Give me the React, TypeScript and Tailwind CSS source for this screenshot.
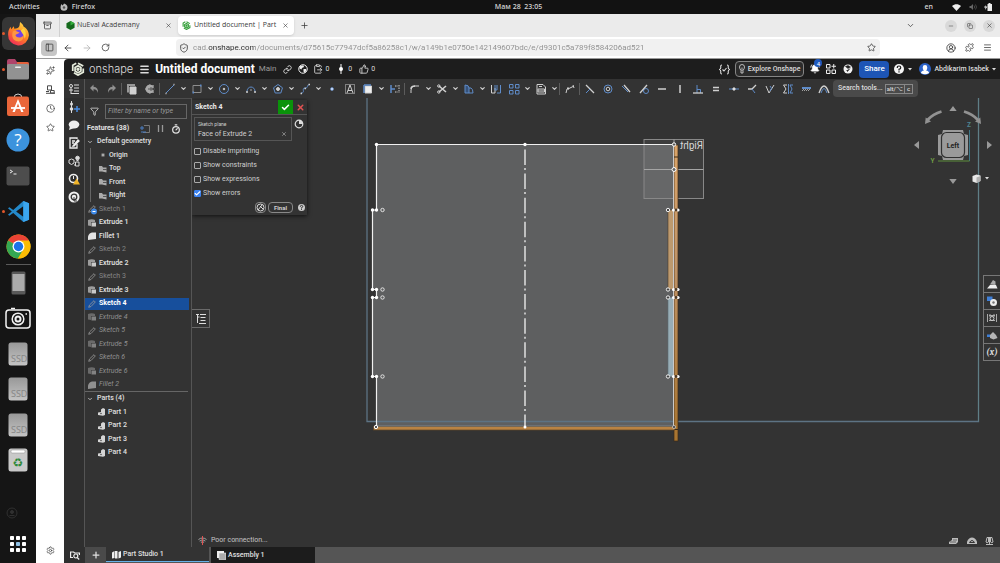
import type { ReactNode } from 'react'
import {
  ArrowLeft, ArrowRight, BellRing, Check, ChevronDown, CircleUserRound, ClipboardPaste, Clock, Filter,
  Link, Menu, MessageCircle, Minus, Plus, Puzzle, RotateCw, Settings, ShieldCheck, Sparkles, Star,
  ThumbsUp, Timer, Wifi, X, PanelLeft, Archive, Copy,
} from 'lucide-react'

type Kind = 'sketch' | 'extrude' | 'fillet' | 'sketchOff'

interface Feature {
  name: string
  kind: Kind
  state: 'on' | 'dim' | 'active' | 'rolled'
}

const FEATURES: Feature[] = [
  { name: 'Sketch 1', kind: 'sketchOff', state: 'dim' },
  { name: 'Extrude 1', kind: 'extrude', state: 'on' },
  { name: 'Fillet 1', kind: 'fillet', state: 'on' },
  { name: 'Sketch 2', kind: 'sketch', state: 'dim' },
  { name: 'Extrude 2', kind: 'extrude', state: 'on' },
  { name: 'Sketch 3', kind: 'sketch', state: 'dim' },
  { name: 'Extrude 3', kind: 'extrude', state: 'on' },
  { name: 'Sketch 4', kind: 'sketch', state: 'active' },
  { name: 'Extrude 4', kind: 'extrude', state: 'rolled' },
  { name: 'Sketch 5', kind: 'sketch', state: 'rolled' },
  { name: 'Extrude 5', kind: 'extrude', state: 'rolled' },
  { name: 'Sketch 6', kind: 'sketch', state: 'rolled' },
  { name: 'Extrude 6', kind: 'extrude', state: 'rolled' },
  { name: 'Fillet 2', kind: 'fillet', state: 'rolled' },
]

const STATE_STYLES: Record<Feature['state'], string> = {
  on: 'text-[#e4e4e4] font-medium',
  dim: 'text-[#858585]',
  active: 'bg-[#174f9c] text-white font-bold',
  rolled: 'text-[#909090] italic',
}

const ROW = 'flex items-center odd:h-[13px] even:h-[14px]'

/* ---------- desktop ---------- */

function TopBar() {
  return (
    <header className="grid h-[14px] shrink-0 grid-cols-3 items-center bg-[#121212] font-['Open_Sans',sans-serif] text-[7px] font-semibold text-[#cfcfcf]">
      <div className="flex items-center pl-[9px]">
        <button>Activities</button>
        <button className="ml-5 flex items-center gap-1">
          <svg width="8" height="8" viewBox="0 0 16 16"><path d="M8 1c3 1 7 3 7 7.500a7 7 0 0 1-14 0C1 6 2 4 3 2l2 3c1-1 2-2 3-4z" fill="#bbb" /><circle cx="8" cy="9" r="2.500" fill="#555" /></svg>
          Firefox
        </button>
      </div>
      <button className="justify-self-center pl-[37px]">Мам 28&nbsp; 23:05</button>
      <div className="flex items-center justify-end pr-2">
        <span>en</span>
        <svg className="ml-[19px]" width="9" height="7" viewBox="0 0 16 12"><path d="M0 3.500C5-1 11-1 16 3.500L8 12z" fill="#eee" /></svg>
        <svg className="ml-2" width="8" height="8" viewBox="0 0 16 16"><path d="M1 6h3l4-4v12l-4-4H1z" fill="#666" /><path d="M10 5q3 3 0 6M13 3q4 5 0 10" fill="none" stroke="#555" strokeWidth="1.500" /></svg>
        <svg className="ml-[7px]" width="8" height="8" viewBox="0 0 16 16"><path d="M7 2h2V0h4v2h3v14H7z" fill="#eee" /><path d="M3 4 0 9h3l-1 5 5-7H3z" fill="#eee" /></svg>
      </div>
    </header>
  )
}

function FirefoxLogo() {
  return (
    <svg width="25" height="25" viewBox="0 0 48 48">
      <defs>
        <linearGradient id="fx" x1="0.8" y1="0" x2="0.2" y2="1">
          <stop offset="0" stopColor="#ffe14a" /><stop offset="0.45" stopColor="#ff8a1e" /><stop offset="1" stopColor="#f0255e" />
        </linearGradient>
      </defs>
      <path d="M27 2c4 3 6 6 7 9 5 2 10 9 10 17A20 20 0 0 1 4 26c0-7 2-11 5-15l1 5 5-6 1 5c4-1 7-1 9-4 2-3 1-6 2-9z" fill="url(#fx)" />
      <circle cx="24" cy="27" r="10" fill="#7542e5" />
      <path d="M13 20c6-3 8 1 13 2-4 4-5 2-8 5 2 6 11 7 16 0 1 9-6 13-12 12-8-1-12-9-9-19z" fill="#ff9640" />
      <path d="M34 14c5 6 5 14 2 20-1-8-5-10-8-16z" fill="#ffd23c" />
    </svg>
  )
}

function ChromeLogo() {
  return (
    <svg width="25" height="25" viewBox="0 0 48 48">
      <circle cx="24" cy="24" r="23" fill="#fbbc05" />
      <path d="M24 24 4 12.500A23 23 0 0 1 44 12.500z" fill="#ea4335" />
      <path d="M24 24 4 12.500A23 23 0 0 0 23 47L34 29z" fill="#34a853" />
      <path d="M24 12.500h20A23 23 0 0 1 23 47l11-18z" fill="#fbbc05" />
      <circle cx="24" cy="24" r="11.500" fill="#fff" />
      <circle cx="24" cy="24" r="9" fill="#1a73e8" />
    </svg>
  )
}

function Ssd() {
  return (
    <svg width="20" height="24" viewBox="0 0 20 24">
      <defs>
        <linearGradient id="ssd" x1="0" y1="0" x2="0" y2="1"><stop offset="0" stopColor="#989898" /><stop offset="1" stopColor="#c4c4c4" /></linearGradient>
      </defs>
      <rect x="0.500" y="0.500" width="19" height="23" rx="2.500" fill="url(#ssd)" />
      <text x="3" y="20" fontSize="9" fill="#858585" fontFamily="Open Sans">SSD</text>
    </svg>
  )
}

function DockItem({ label, running, active, children }: { label: string; running?: boolean; active?: boolean; children: ReactNode }) {
  return (
    <li className="relative flex w-full items-center justify-center odd:h-[35px] even:h-9">
      {running && <span className="absolute left-[2px] size-[3px] rounded-full bg-[#e2582c]" />}
      <button aria-label={label} className={`flex h-[33px] w-[33px] items-center justify-center rounded-md ${active ? 'bg-[#363636]' : ''}`}>
        {children}
      </button>
    </li>
  )
}

function Dock() {
  return (
    <nav aria-label="Dock" className="flex w-9 shrink-0 flex-col items-center bg-[#151515] pt-[2px]">
      <ul className="w-full">
        <DockItem label="Firefox" running active><FirefoxLogo /></DockItem>
        <DockItem label="Files" running>
          <svg width="24" height="22" viewBox="0 0 24 22"><path d="M1 3q0-2 2-2h6l2 3h10q2 0 2 2v6H1z" fill="#b0446a" /><path d="M11 4h10q2 0 2 2v6H11z" fill="#e2603a" /><rect x="1" y="6" width="22" height="15.500" rx="1.500" fill="#929292" /><rect x="9" y="8.500" width="6" height="1.500" rx="0.700" fill="#eee" /></svg>
        </DockItem>
        <DockItem label="Software">
          <svg width="24" height="24" viewBox="0 0 24 24"><path d="M8 5q0-4 4-4t4 4" fill="none" stroke="#ccc" /><rect x="1" y="3.500" width="22" height="19.500" rx="2" fill="#e9663a" /><path d="M12 6 6.500 19h2.300l3.200-8.500 3.200 8.500h2.300z" fill="#fff" /><path d="M5 15h14" stroke="#fff" strokeWidth="1.800" /></svg>
        </DockItem>
        <DockItem label="Help">
          <svg width="24" height="24" viewBox="0 0 24 24"><circle cx="12" cy="12" r="11.500" fill="#3c93dd" /><text x="12" y="18" textAnchor="middle" fontSize="17" fill="#fff" fontFamily="Open Sans">?</text></svg>
        </DockItem>
        <DockItem label="Terminal">
          <svg width="24" height="20" viewBox="0 0 24 20"><rect x="0.500" y="0.500" width="23" height="19" rx="2" fill="#4d4d4d" /><path d="m4 4 2.500 1.500L4 7M7.500 8h3" fill="none" stroke="#eee" /></svg>
        </DockItem>
        <DockItem label="Code" running>
          <svg width="23" height="23" viewBox="0 0 24 24"><path d="M17 1 6.500 10.500 2.500 7.500 1 8.500 5 12l-4 3.500 1.500 1 4-3L17 23l6-2.500v-17z" fill="#2489ca" /><path d="M17 6.500v11L9.500 12z" fill="#151515" /><path d="m17 1 6 2.500v17L17 23z" fill="#3ba6ee" /></svg>
        </DockItem>
        <DockItem label="Chrome"><ChromeLogo /></DockItem>
      </ul>
      <hr className="w-[25px] border-[#5a5a5a]" />
      <ul className="w-full">
        <DockItem label="Phone">
          <svg width="15" height="24" viewBox="0 0 15 24"><rect x="0.500" y="0.500" width="14" height="23" rx="1.500" fill="#595959" /><rect x="1.500" y="3" width="12" height="17" fill="#ababab" /></svg>
        </DockItem>
        <DockItem label="Camera">
          <svg width="26" height="22" viewBox="0 0 26 22" fill="none" stroke="#f2f2f2" strokeWidth="1.500"><rect x="1" y="3" width="24" height="18" rx="3" /><path d="M6 1.500h4" /><circle cx="13" cy="12" r="5.800" /><circle cx="13" cy="12" r="2.500" strokeWidth="2" /><path d="M20.500 7h1.500" /></svg>
        </DockItem>
        <DockItem label="Disk 1"><Ssd /></DockItem>
        <DockItem label="Disk 2"><Ssd /></DockItem>
        <DockItem label="Disk 3"><Ssd /></DockItem>
        <DockItem label="Trash">
          <svg width="20" height="24" viewBox="0 0 20 24"><rect x="0.500" y="0.500" width="19" height="23" rx="2.500" fill="#c9c9c9" /><rect x="3" y="2" width="14" height="3" rx="1" fill="#fff" stroke="#888" strokeWidth="0.500" /><text x="10" y="19" textAnchor="middle" fontSize="12" fill="#2f8a3a" fontFamily="DejaVu Sans">♻</text></svg>
        </DockItem>
      </ul>
      <svg className="mt-auto mr-3" width="12" height="12" viewBox="0 0 12 12" fill="none" stroke="#303030"><circle cx="6" cy="6" r="5" /><circle cx="6" cy="5" r="1.500" fill="#303030" /><path d="M3.500 8.500h5" /></svg>
      <button aria-label="Show applications" className="mt-4 mb-[10px]">
        <svg width="18" height="18" viewBox="0 0 18 18">
          {[1, 7, 13].map((y) => [1, 7, 13].map((x) => <rect key={`${x}-${y}`} x={x} y={y} width="4" height="4" rx="0.800" fill={x === 7 && y === 7 ? '#8fc1e6' : '#fff'} />))}
        </svg>
      </button>
    </nav>
  )
}

/* ---------- browser ---------- */

function HexLogo({ size, color }: { size: number; color: string }) {
  return (
    <svg className="shrink-0" width={size} height={size} viewBox="0 0 24 24" fill="none" stroke={color} strokeWidth="3">
      <path d="M9 2 3 5.500v10M5 18.500l7 4 9-5V11M21 7l-9-5" />
      <path d="m12 6.500 5 3v6l-5 3-5-3v-6z" />
      <circle cx="12" cy="12.500" r="1.500" fill={color} />
    </svg>
  )
}

function BrowserChrome() {
  return (
    <div className="shrink-0 font-['Open_Sans',sans-serif] text-[#3b3b3b]">
      {/* Tabs */}
      <div className="flex h-[23px] items-center bg-[#ebebeb] text-[7px]">
        <button aria-label="Recent tabs" className="flex h-full w-6 items-center justify-center border-r border-[#d0d0d0]"><Archive size={9} /></button>
        <div className="flex w-[118px] items-center px-[6px]">
          <svg width="9" height="9" viewBox="0 0 10 10"><path d="m5 0 4.500 2.500v5L5 10 .5 7.500v-5z" fill="#14691c" /><path d="m5 5 4.500-2.500L5 0z" fill="#35b03c" /></svg>
          <span className="ml-[2px] flex-1 whitespace-nowrap">NuEval Academany</span>
          <button aria-label="Close NuEval Academany"><X size={7} /></button>
        </div>
        <div className="flex h-[19px] w-[116px] items-center rounded bg-white pr-[5px] pl-1 shadow-sm">
          <HexLogo size={9} color="#35a03a" />
          <span className="ml-[3px] flex-1 whitespace-nowrap">Untitled document | Part</span>
          <button aria-label="Close Untitled document"><X size={7} /></button>
        </div>
        <button aria-label="New tab" className="ml-[6px]"><Plus size={9} /></button>
        <button aria-label="List all tabs" className="ml-auto"><ChevronDown size={9} /></button>
        <div className="ml-[30px] flex gap-[7px] pr-[5px]">
          <button aria-label="Minimize" className="flex size-3 items-center justify-center rounded-full bg-[#d9d9d9]"><Minus size={6} /></button>
          <button aria-label="Restore" className="flex size-3 items-center justify-center rounded-full bg-[#d9d9d9]"><Copy size={6} /></button>
          <button aria-label="Close" className="flex size-3 items-center justify-center rounded-full bg-[#d9d9d9]"><X size={7} /></button>
        </div>
      </div>
      {/* Address bar */}
      <div className="flex h-[22px] items-center border-b border-[#999] bg-white">
        <button aria-label="Sidebar" className="ml-[5px] flex h-4 w-4 items-center justify-center rounded-sm bg-[#c6c6c6]"><PanelLeft size={9} /></button>
        <button aria-label="Back" className="ml-[6px]"><ArrowLeft size={10} /></button>
        <button aria-label="Forward" className="ml-[9px] text-[#b4b4b4]"><ArrowRight size={10} /></button>
        <button aria-label="Reload" className="ml-[9px]"><RotateCw size={9} /></button>
        <div className="ml-[66px] flex h-[17px] flex-1 items-center rounded bg-[#f1f1f1] pr-1 pl-[3px]">
          <ShieldCheck size={10} />
          <input
            aria-label="Address"
            className="ml-1 flex-1 bg-[linear-gradient(90deg,#8e8e8e_15px,#2b2b2b_15px,#2b2b2b_62px,#8e8e8e_62px)] bg-clip-text font-['Roboto',sans-serif] text-[8px] text-transparent outline-none"
            defaultValue="cad.onshape.com/documents/d75615c77947dcf5a86258c1/w/a149b1e0750e142149607bdc/e/d9301c5a789f8584206ad521"
          />
          <button aria-label="Bookmark"><Star size={9} /></button>
        </div>
        <div className="ml-[66px] flex gap-[9px] pr-2">
          <button aria-label="Account"><CircleUserRound size={10} /></button>
          <button aria-label="Extensions"><Puzzle size={9} /></button>
          <button aria-label="Menu"><Menu size={9} /></button>
        </div>
      </div>
    </div>
  )
}

function BrowserSidebar() {
  return (
    <nav aria-label="Sidebar" className="flex w-7 shrink-0 flex-col items-center gap-[10px] bg-white pt-[7px] pb-2 text-[#4a4a4a]">
      <button aria-label="Assistant"><Sparkles size={9} /></button>
      <button aria-label="Synced tabs">
        <svg width="9" height="9" viewBox="0 0 9 9" fill="none" stroke="#4a4a4a"><path d="M1.500 5V.8h4V5zM4.500 5.500h3.700V8H4.500zM0 6.500h3M0 8.300h9" /></svg>
      </button>
      <button aria-label="History"><Clock size={9} /></button>
      <button aria-label="Bookmarks"><Star size={9} /></button>
      <button aria-label="Settings" className="mt-auto"><Settings size={9} /></button>
    </nav>
  )
}

/* ---------- application header ---------- */

function AppHeader() {
  return (
    <header className="flex h-5 shrink-0 items-center rounded-tl bg-[#1d1d1d] text-[7px] whitespace-nowrap text-[#dcdcdc]">
      <a href="#" className="ml-[7px] flex items-center gap-1 font-['Inter',sans-serif] text-[11px] leading-none font-light">
        <HexLogo size={14} color="#e6ecdc" />
        onshape
      </a>
      <button aria-label="Document menu" className="ml-[6px]"><Menu size={11} strokeWidth={3} /></button>
      <h1 className="ml-[5px] text-[12px] leading-none font-bold text-white">Untitled document</h1>
      <span className="ml-1 text-[8px] text-[#9b9b9b]">Main</span>
      <button aria-label="Copy link" className="ml-[7px]"><Link size={9} strokeWidth={2.5} /></button>
      <button aria-label="Public" className="ml-[6px]">
        <svg width="10" height="10" viewBox="0 0 20 20"><circle cx="10" cy="10" r="8.500" fill="#1d1d1d" stroke="#eee" strokeWidth="2" /><path d="M3 5q4-3 8-2l1 3-4 2-1 3-4-2zM11 10l5 0 1 3-4 5-2-3z" fill="#eee" /></svg>
      </button>
      <button className="ml-[5px] flex items-center gap-[2px]"><ClipboardPaste size={10} /> 0</button>
      <button className="ml-2 flex items-center gap-[3px]">
        <svg width="8" height="10" viewBox="0 0 8 10"><path d="M4 0v10" stroke="#fff" /><circle cx="4" cy="5" r="2" fill="#fff" /></svg>0
      </button>
      <button className="ml-[7px] flex items-center gap-[2px]"><ThumbsUp size={10} /> 0</button>

      <div className="ml-auto flex items-center">
        <button aria-label="Custom checks">
          <svg width="11" height="11" viewBox="0 0 22 22" fill="none" stroke="#ddd" strokeWidth="2.200"><path d="M6 2Q3 2 3.500 6 4 10 1 11q3 1 2.500 5Q3 20 6 20M16 2q3 0 2.500 4Q18 10 21 11q-3 1-2.500 5 .5 4-2.500 4M7 11l3 3 5-6" /></svg>
        </button>
        <button className="ml-[5px] flex h-4 items-center gap-[3px] rounded-sm border border-[#858585] bg-[#2c2c2c] px-[3px] font-medium">
          <svg width="6" height="10" viewBox="0 0 12 20" fill="none" stroke="#ddd" strokeWidth="1.600"><path d="M4 13Q1 9 1 6a5 5 0 0 1 10 0q0 3-3 7v5H4zM6 7v7" /></svg>
          Explore Onshape
        </button>
        <button aria-label="Notifications" className="relative ml-[6px] text-white">
          <BellRing size={10} fill="white" />
          <span className="absolute -top-[5px] left-1 flex size-2 items-center justify-center rounded-sm bg-[#2059bd] text-[6px]">4</span>
        </button>
        <button aria-label="App store" className="ml-[6px]">
          <svg width="10" height="10" viewBox="0 0 20 20" fill="none" stroke="#eee" strokeWidth="2"><path d="M1 1h7v7H1zM1 12h7v7H1zM12 12h7v7h-7zM15.500 0v9M11 4.500h9" /></svg>
        </button>
        <button aria-label="Learning center" className="ml-[7px]">
          <svg width="10" height="10" viewBox="0 0 20 20"><circle cx="10" cy="10" r="9" fill="#f2f2f2" /><path d="m5 5 5-2 5 3-5 3zM7 13l2 2 5-6" fill="#222" stroke="#222" strokeWidth="1.200" /></svg>
        </button>
        <button className="ml-[6px] h-[17px] w-[30px] rounded-sm bg-[#1d55b5] text-[8px] font-medium text-white">Share</button>
        <button className="ml-[5px] flex items-center gap-1" aria-label="Help">
          <svg width="10" height="10" viewBox="0 0 20 20"><circle cx="10" cy="10" r="10" fill="#f5f5f5" /><path d="M6.500 8q0-4 3.500-4t3.500 3.500Q13.500 10 10 10.500V13M10 14.500V17" fill="none" stroke="#1d1d1d" strokeWidth="2.400" /></svg>
          <svg width="4" height="3" viewBox="0 0 4 3"><path d="M0 0h4L2 2.500z" fill="#ddd" /></svg>
        </button>
        <button className="ml-[7px] flex items-center gap-[3px] pr-1 font-medium">
          <svg width="12" height="12" viewBox="0 0 24 24"><circle cx="12" cy="12" r="12" fill="#2c63c8" /><path d="M12 4q5 0 4.500 6-.5 4-2.500 5 6 1 6 5-8 5-16 0 0-4 6-5-2-1-2.500-5Q7 4 12 4z" fill="#fff" /></svg>
          Abdikarim Isabek
          <svg width="4" height="3" viewBox="0 0 4 3"><path d="M0 0h4L2 2.500z" fill="#ddd" /></svg>
        </button>
      </div>
    </header>
  )
}

/* ---------- toolbar ---------- */

const W = '#d0d0d0'
const B = '#5f8cc9'

function Tool({ label, caret, children }: { label: string; caret?: boolean; children: ReactNode }) {
  return (
    <div className={`flex shrink-0 items-center ${caret ? 'w-[27px]' : 'w-[18px]'}`}>
      <button aria-label={label} className="w-[14px]">
        <svg width="14" height="14" viewBox="0 0 14 14" fill="none" stroke={W}>{children}</svg>
      </button>
      {caret && (
        <button aria-label={`${label} options`} className="flex w-[13px] justify-center text-[#d0d0d0]">
          <ChevronDown size={7} strokeWidth={4} />
        </button>
      )}
    </div>
  )
}

function Divider() {
  return <span className="mr-[3px] -ml-[2px] h-3 w-px shrink-0 bg-[#5c5c5c]" />
}

const CONSTRAINTS: { label: string; icon: ReactNode }[] = [
  { label: 'Coincident', icon: <><path d="m3 3 8 8" strokeWidth="1.300" /><path d="m7 7-4 4" stroke={B} /></> },
  { label: 'Concentric', icon: <><circle cx="7" cy="7" r="4" stroke={B} /><circle cx="7" cy="7" r="1.800" /></> },
  { label: 'Parallel', icon: <><path d="m3 4 6 6" stroke={B} /><path d="m5 3 6 7" strokeWidth="1.300" /></> },
  { label: 'Tangent', icon: <><circle cx="9" cy="9" r="2.500" stroke={B} /><path d="m3 11 7-8" strokeWidth="1.300" /></> },
  { label: 'Horizontal', icon: <path d="M3 7h8" strokeWidth="1.500" /> },
  { label: 'Vertical', icon: <path d="M7 3v8" strokeWidth="1.500" /> },
  { label: 'Perpendicular', icon: <><path d="M6 3v8" stroke={B} /><path d="M6 7.500h3.500V11" stroke={B} /><path d="M2 11h10" strokeWidth="1.300" /></> },
  { label: 'Equal', icon: <path d="M4 5.500h6M4 8.500h6" strokeWidth="1.500" /> },
  { label: 'Midpoint', icon: <><path d="M2 7h10" stroke={B} /><circle cx="7" cy="7" r="1.200" fill="#fff" /></> },
  { label: 'Normal', icon: <><path d="m3 7 4 0 4-4" strokeWidth="1.300" /><path d="m7 7 3 4" stroke={B} /></> },
  { label: 'Pierce', icon: <><path d="m3 4 3 7 5-8" /><path d="M7 4q3 2 0 5" stroke={B} /></> },
  { label: 'Symmetric', icon: <><path d="M6 3H2.500l2.500 4-2.500 4H6" /><path d="M12 3H9l2 4-2 4h3M7.500 2v10" stroke={B} /></> },
  { label: 'Fix', icon: <><path d="M3 6h9" stroke={B} strokeWidth="2" /><path d="m3 9 2-2m0 2 2-2m0 2 2-2m0 2 2-2" strokeWidth="0.700" /></> },
  { label: 'Curvature', icon: <><path d="M2 11Q7-3 12 11" strokeWidth="1.300" /><path d="M4 11Q7 2 10 11" stroke={B} /></> },
]

function Toolbar() {
  return (
    <div role="toolbar" aria-label="Sketch tools" className="flex h-[19px] shrink-0 items-center bg-[#333]">
      <button aria-label="Feature list" className="mr-[2px] flex h-full w-[21px] items-center justify-center border-r border-[#555]">
        <svg width="12" height="12" viewBox="0 0 12 12" fill="none" stroke="#ddd"><circle cx="3" cy="3" r="1.500" /><path d="M3 4.500V11M6 2h5M6 5h5M6 8h5M3 10.500h8M1 7h4" /></svg>
      </button>
      <Tool label="Undo"><path d="M6.500 2.500 3 6l3.500 3.500V7.200Q10 7 11 11q.5-6-4.500-6.300z" fill="#909090" stroke="none" /></Tool>
      <Tool label="Redo"><path d="M7.500 2.500 11 6 7.500 9.500V7.200Q4 7 3 11q-.5-6 4.500-6.300z" fill="#909090" stroke="none" /></Tool>
      <Divider />
      <Tool label="Copy"><path d="M3 10.500V3h7" stroke="#999" strokeWidth="2" /><path d="M5 5h6v7H5z" fill={W} /></Tool>
      <Tool label="Dimension"><path d="M9.500 4A4 4 0 1 0 9.500 10" fill="#aaa" stroke="#aaa" /><path d="M5 7h7M8 5v4" stroke="#555" /><path d="M10 3v3M10 8v3" /></Tool>
      <Divider />
      <Tool label="Line" caret><path d="m3 11 8-8" stroke={B} /><path d="M2.500 11.500h1M10.500 2.500h1" strokeWidth="1.500" /></Tool>
      <Tool label="Rectangle" caret><path d="M3 3.500h8v7H3z" stroke="#8d8d8d" /><path d="M2.500 10.500h1.500M10 3.500h1.500" stroke={B} strokeWidth="1.800" /></Tool>
      <Tool label="Circle" caret><circle cx="7" cy="7" r="4.500" stroke={B} /><circle cx="7" cy="7" r="0.800" fill={W} /></Tool>
      <Tool label="Arc" caret><path d="M3 9.500a4 4.500 0 0 1 8 0" stroke={B} /><path d="M2 10h2M10 10h2M6.500 8h1" strokeWidth="1.500" /></Tool>
      <Tool label="Polygon" caret><path d="m7 2.500 4.500 3.300-1.700 5.200H4.200L2.500 5.800z" stroke={B} /><circle cx="7" cy="7" r="1.500" fill={W} /></Tool>
      <Tool label="Spline" caret><path d="M3 11c5 0 0-5 4-5s1-3 4-3" stroke={B} /><path d="M2.500 11.500h1.500M6.500 6.500h1.500M10.500 2.500h1.500" strokeWidth="1.500" /></Tool>
      <Tool label="Point"><circle cx="7" cy="7" r="1.500" fill="#cfe2ff" stroke={B} strokeWidth="0.600" /></Tool>
      <Tool label="Text"><path d="M2.500 2.500h9v9h-9z" strokeDasharray="1 1" /><path d="m4 11 3-8 3 8M5 8.500h4" /></Tool>
      <Tool label="Use" caret><path d="M4 4h6.500v7H4z" fill="#eee" /><path d="m3 3 7 0M3 3v8" stroke={B} strokeWidth="1.500" /></Tool>
      <Tool label="Construction"><path d="M3 3v8M3 7h4" stroke={B} strokeWidth="1.500" /><path d="M7 4h3M7 10h3M11 3v8" strokeDasharray="1.500 1" /></Tool>
      <Divider />
      <Tool label="Sketch fillet" caret><path d="M3 11V8q0-4 4-4h4" /><path d="M3 7q0-3 4-3" strokeWidth="1.500" /></Tool>
      <Tool label="Trim" caret><path d="m4 4 7 6M4 10l7-6" strokeWidth="1.600" /><circle cx="3.800" cy="4" r="1.200" /><circle cx="3.800" cy="10" r="1.200" /></Tool>
      <Tool label="Offset" caret><path d="M3 11V3q4 0 4 3v5z" stroke={B} fill="#36527a" /><path d="M7 6h2q2 1 2 5H7" stroke={B} /></Tool>
      <Tool label="Slot"><path d="M2.500 3v8h3.500V6" /><path d="M6 3v5h2V3M8 11h3.500V3" stroke={B} /></Tool>
      <Tool label="Pattern" caret><path d="M2.500 2.500H6V6H2.500zM8.500 2.500H12V6H8.500zM2.500 8.500H6V12H2.500zM8.500 8.500H12V12H8.500z" stroke={B} /></Tool>
      <Tool label="Insert DXF" caret><path d="M3 2.500h6l2.500 2.500v7H3z" /><path d="M4 7h6.500v3H4zM5 4.500h3" /><path d="M4.500 8.500h5.500" strokeWidth="1.500" strokeDasharray="1 1" /></Tool>
      <Divider />
      <Tool label="Measure"><path d="m3 11 1-4M5 7l6-3M10 3l1 3" /><path d="M4 6.500h2" strokeWidth="2" /></Tool>
      <Divider />
      <div className="flex w-[243px] shrink-0 justify-between">
        {CONSTRAINTS.map((c) => <Tool key={c.label} label={c.label}>{c.icon}</Tool>)}
      </div>
      <button className="ml-[7px] flex h-[17px] w-[85px] shrink-0 items-center justify-center rounded-sm bg-[#4a4a4a] text-[7px] font-medium whitespace-nowrap text-[#ddd]">
        Search tools...
        <kbd className="ml-[2px] border border-[#888] px-px font-['Roboto',sans-serif] text-[6px] leading-[8px]">alt/⌥</kbd>
        <kbd className="border border-l-0 border-[#888] px-[2px] font-['Roboto',sans-serif] text-[6px] leading-[8px]">c</kbd>
      </button>
    </div>
  )
}

/* ---------- feature panel ---------- */

function LeftStrip() {
  return (
    <nav aria-label="Panels" className="flex w-[21px] shrink-0 flex-col items-center gap-[6px] border-r border-[#555] bg-[#2f2f2f] pt-[3px] text-[#eee]">
      <button aria-label="Insert version">
        <svg width="12" height="12" viewBox="0 0 12 12"><path d="M3.500 0v12" stroke="#ddd" /><circle cx="3.500" cy="3" r="1.500" fill="#ddd" /><circle cx="3.500" cy="8" r="1.800" fill="#ddd" /><path d="M9 5v6M6 8h6" stroke="#4a8ce0" strokeWidth="1.500" /></svg>
      </button>
      <button aria-label="Comments">
        <svg width="12" height="12" viewBox="0 0 12 12"><ellipse cx="6" cy="5.500" rx="5.300" ry="4" fill="#eee" /><path d="m2 7-1 4 5-2z" fill="#eee" /></svg>
      </button>
      <button aria-label="Notes">
        <svg width="12" height="12" viewBox="0 0 12 12" fill="none" stroke="#eee" strokeWidth="1.300"><path d="M9 7v4H2V1h7v1M4 4h3M4 6h2" /><path d="m5 9 5-6 1 1-5 5z" /></svg>
      </button>
      <button aria-label="Configurations">
        <svg width="12" height="12" viewBox="0 0 12 12" fill="none" stroke="#ddd"><path d="m1 5 2.500-1L6 5v3L3.500 9.500 1 8z" /><circle cx="9.500" cy="3" r="1.800" fill="#ddd" /><path d="M7.500 7h3.500v4H7.500zM8.500 5.500h2M6 10h1" /></svg>
      </button>
      <button aria-label="Warnings">
        <svg width="12" height="12" viewBox="0 0 12 12"><circle cx="5.500" cy="5.500" r="4" fill="none" stroke="#eee" strokeWidth="1.600" /><path d="M5.500 3v3" stroke="#eee" /><path d="m8.500 5.500 3.500 6H5z" fill="#f0b429" /></svg>
      </button>
      <button aria-label="Help">
        <svg width="12" height="12" viewBox="0 0 12 12"><circle cx="6" cy="6" r="5.500" fill="#f0f0f0" /><circle cx="6" cy="6" r="2.800" fill="none" stroke="#333" strokeWidth="1.300" /><path d="M6 6v4h3" stroke="#333" fill="none" /></svg>
      </button>
    </nav>
  )
}

function FeatureIcon({ kind }: { kind: Kind }) {
  if (kind === 'extrude') {
    return <svg width="8" height="8" viewBox="0 0 8 8"><path d="M0 1q4-1.500 7 0v2H3v4L0 6.500z" fill="currentColor" opacity="0.600" /><path d="M3.500 3.500H8v4H3.500z" fill="currentColor" opacity="0.850" /></svg>
  }
  if (kind === 'fillet') {
    return <svg width="8" height="8" viewBox="0 0 8 8"><path d="M0 8V4.500Q1 1 4 0.500h4V7z" fill="currentColor" /></svg>
  }
  return (
    <svg width="8" height="8" viewBox="0 0 8 8" className="overflow-visible">
      <path d="M.7 7.300 1.500 5 6 .7 7.300 2 3 6.500z" fill="none" stroke="#9a9a9a" strokeWidth="0.800" />
      {kind === 'sketchOff' && <><circle cx="6" cy="6.500" r="3" fill="#3f8ae8" /><path d="M4.500 6.500h3" stroke="#fff" /></>}
    </svg>
  )
}

function FeaturePanel() {
  return (
    <aside className="flex w-[107px] shrink-0 flex-col border-r border-[#555] bg-[#333] text-[7px] text-[#e0e0e0]">
      <div className="flex h-[25px] items-center gap-[6px] border-t border-[#4d4d4d] pr-1 pl-[5px]">
        <Filter size={9} />
        <input aria-label="Filter features" placeholder="Filter by name or type" className="h-[15px] w-0 flex-1 border border-[#666] px-[2px] italic outline-none placeholder:text-[#999]" />
      </div>
      <div className="flex h-[11px] items-center pl-[2px]">
        <h2 className="font-bold">Features (38)</h2>
        <div className="ml-auto flex items-center gap-[7px] pr-[10px]">
          <button aria-label="Add folder"><svg width="10" height="8" viewBox="0 0 10 8" fill="none"><path d="M4 .5h5.500v7H3" stroke="#777" /><path d="M0 3h4M2 1v4M1 7h5" stroke="#4a7fc4" /></svg></button>
          <button aria-label="Pause"><svg width="7" height="7" viewBox="0 0 7 7"><path d="M1.500 0v7M5.500 0v7" stroke="#999" strokeWidth="1.300" /></svg></button>
          <button aria-label="Timing"><Timer size={10} strokeWidth={3} /></button>
        </div>
      </div>
      <ul className="pt-px">
        <li className={ROW}>
          <button className="flex items-center gap-1 pl-[2px] font-medium"><ChevronDown size={6} strokeWidth={3} />Default geometry</button>
        </li>
        {['Origin', 'Top', 'Front', 'Right'].map((name) => (
          <li key={name} className={ROW}>
            <button className="ml-[5px] flex h-full items-center gap-[2px] border-l border-[#666] pl-2 font-medium">
              {name === 'Origin'
                ? <svg width="8" height="8" viewBox="0 0 8 8"><circle cx="4" cy="4" r="1.700" fill="#aaa" stroke="#666" /></svg>
                : <svg width="8" height="8" viewBox="0 0 8 8"><path d="M0 1h3l1 1.500h3.500v5L3 6.500H0z" fill="#aaa" /><path d="M4 4.500h4" stroke="#555" /></svg>}
              {name}
            </button>
          </li>
        ))}
        {FEATURES.map((f) => (
          <li key={f.name} className={`${ROW} pr-[2px]`}>
            <button className={`flex h-3 w-full items-center gap-[3px] pl-[3px] ${STATE_STYLES[f.state]}`}>
              <FeatureIcon kind={f.kind} />
              {f.name}
            </button>
          </li>
        ))}
      </ul>
      <ul className="mr-[3px] border-t border-[#666]">
        <li className={ROW}>
          <button className="flex items-center gap-1 pl-[2px] font-medium"><ChevronDown size={6} strokeWidth={3} />Parts (4)</button>
        </li>
        {[1, 2, 3, 4].map((n) => (
          <li key={n} className={ROW}>
            <button className="flex items-center gap-[2px] pl-[13px] font-medium">
              <svg width="8" height="8" viewBox="0 0 8 8"><path d="M3 1.500 5 0l2 1v6l-2 .8L0 7V4.500L3 4z" fill="#d5d5d5" /><circle cx="3" cy="5.500" r="0.800" fill="#555" /></svg>
              Part {n}
            </button>
          </li>
        ))}
      </ul>
    </aside>
  )
}

/* ---------- modelling canvas ---------- */

const JOINTS = [210, 289.5, 297.5, 376.5]

function Drawing() {
  return (
    <svg className="absolute inset-0 h-full w-full" aria-hidden="true">
      <defs>
        <linearGradient id="wood" x1="0" y1="0" x2="0" y2="1">
          <stop offset="0" stopColor="#dba468" /><stop offset="0.400" stopColor="#c09468" /><stop offset="1" stopColor="#a8742f" />
        </linearGradient>
      </defs>
      <g transform="translate(-192 -98)">
        <path d="M376.500 144.500H674V427H376.500V376.500H372.500V297.500H376.500V289.500H372.500V210H376.500z" fill="#5e5f60" />
        <path d="M367 98V421.500H978.500V98" fill="none" stroke="#5d7384" strokeWidth="1.300" />
        <path d="M978.500 98V421.500" stroke="#5f7f86" />
        <rect x="644" y="139.500" width="59.500" height="59" fill="#ffffff" fillOpacity="0.050" stroke="#888" />
        <path d="M644 169.500h59.500M674 139.500v59" stroke="#a5a5a5" />
        <rect x="668" y="210" width="6" height="79.500" fill="#bd9a6f" stroke="#4d3b26" strokeWidth="0.600" />
        <rect x="668" y="297.500" width="6" height="79" fill="#98adb6" stroke="#5b6b73" strokeWidth="0.600" />
        <rect x="674" y="145" width="4" height="296" fill="url(#wood)" stroke="#3b2a17" strokeWidth="0.700" />
        <path d="M674 157h4M674 429.500h4" stroke="#3b2a17" />
        <rect x="373.500" y="426.500" width="301" height="3.500" fill="#b98343" stroke="#5e4526" strokeWidth="0.700" />
        <path d="M376.500 427V376.500H372.500V297.500H376.500V289.500H372.500V210H376.500V144.500H674" fill="none" stroke="#f0f0f0" strokeWidth="1.200" />
        <path d="M673.500 144.500V427" stroke="#c9c9c9" />
        <path d="M376.500 426H674" stroke="#8497a0" strokeWidth="0.700" />
        <path d="M525 149.500V427" stroke="#e8e8e8" strokeWidth="1.400" strokeDasharray="15.500 3 2 3.600" />
        {JOINTS.map((y) => (
          <g key={y}>
            <circle cx="372.500" cy={y} r="1.700" fill="#fff" />
            <circle cx="376.500" cy={y} r="1.700" fill="#fff" />
            <circle cx="382.500" cy={y} r="1.700" fill="none" stroke="#e5e5e5" />
            <circle cx="668" cy={y} r="1.700" fill="#444" stroke="#f0f0f0" />
            <circle cx="673.500" cy={y} r="1.600" fill="#fff" />
            <circle cx="678" cy={y} r="1.600" fill="#fff" />
            <circle cx="676" cy={y} r="1.400" fill="#4b3824" />
          </g>
        ))}
        <circle cx="376.500" cy="144.500" r="1.700" fill="#fff" />
        <circle cx="525" cy="144.500" r="1.700" fill="#fff" />
        <circle cx="525" cy="427" r="1.500" fill="#fff" />
        <circle cx="674" cy="144.500" r="1.700" fill="#555" stroke="#fff" />
        <circle cx="674" cy="169.500" r="2" fill="#666" stroke="#fff" />
        <circle cx="376" cy="427" r="1.700" fill="#555" stroke="#fff" />
        <circle cx="674" cy="427" r="1.500" fill="#333" stroke="#ddd" strokeWidth="0.700" />
        <text transform="translate(703 149) scale(-1 1)" fontSize="10" fill="#d8d8d8" fontFamily="Roboto">Right</text>
      </g>
    </svg>
  )
}

function ViewCube() {
  return (
    <svg className="absolute top-[4px] right-2 h-[84px] w-[80px]" viewBox="912 102 80 84" role="img" aria-label="View cube, left view">
      <path d="M941.500 111.500Q933 114 927.500 120" fill="none" stroke="#929292" strokeWidth="2.800" />
      <path d="m925 124 .7-6.500 5.300 4z" fill="#929292" />
      <path d="M964 111.500Q972.500 114 978 120" fill="none" stroke="#929292" strokeWidth="2.800" />
      <path d="m981 124-.7-6.500-5.300 4z" fill="#929292" />
      <path d="m953 106 3.700 5h-7.400zM953 184l3.700-5h-7.400zM914 145l5-4v8zM992 145l-5-4v8z" fill="#999" />
      <path d="M943 130h20l1 4 4 1v20l-4 1-1 4h-20l-1-4-4-1v-20l4-1z" fill="#9a9a9a" />
      <rect x="941.500" y="132.500" width="23" height="25" rx="5" fill="#9a9a9a" stroke="#303030" strokeWidth="1.200" />
      <text x="953" y="147.500" textAnchor="middle" fontSize="7" fontWeight="700" fill="#222" fontFamily="Roboto">Left</text>
      <path d="M969.500 130v31" stroke="#3f7888" />
      <path d="M938 161h31.500" stroke="#5f8f3c" />
      <text x="967" y="127" fontSize="6.500" fontWeight="700" fill="#4f8594" fontFamily="Roboto">Z</text>
      <text x="930.500" y="163" fontSize="6.500" fontWeight="700" fill="#6f9a45" fontFamily="Roboto">Y</text>
    </svg>
  )
}

function CheckRow({ label, checked }: { label: string; checked?: boolean }) {
  return (
    <label className="flex h-[14px] items-center gap-[2px]">
      <span className="relative flex size-[7px]">
        <input type="checkbox" defaultChecked={checked} className="peer size-[7px] appearance-none rounded-[1px] border border-[#aaa] checked:border-[#3b82f0] checked:bg-[#3b82f0]" />
        <Check size={7} strokeWidth={4} className="pointer-events-none absolute inset-0 hidden text-white peer-checked:block" />
      </span>
      {label}
    </label>
  )
}

function SketchDialog() {
  return (
    <section aria-label="Sketch 4" className="absolute top-[2px] left-0 w-[115px] bg-[#333] text-[7px] text-[#cfcfcf] shadow-[0_1px_4px_#111]">
      <div className="flex h-[15px] items-center border-b border-[#555] pl-[3px]">
        <h2 className="pt-px font-bold text-[#e8e8e8]">Sketch 4</h2>
        <button aria-label="Accept" className="ml-auto flex h-[14px] w-[15px] items-center justify-center bg-[#0a930a] text-white"><Check size={9} strokeWidth={4} /></button>
        <button aria-label="Cancel" className="flex h-[14px] w-[14px] items-center justify-center text-[#e05252]"><X size={9} strokeWidth={4} /></button>
      </div>
      <div className="flex items-start gap-[2px] pt-[2px] pl-[2px]">
        <div className="h-6 w-[98px] border border-[#555] pl-[3px]">
          <p className="mt-[2px] text-[5px] leading-[9px]">Sketch plane</p>
          <div className="flex items-center justify-between pr-1">
            Face of Extrude 2
            <button aria-label="Clear sketch plane"><X size={6} /></button>
          </div>
        </div>
        <svg width="10" height="10" viewBox="0 0 10 10" className="mt-[2px]"><circle cx="5" cy="5" r="3.800" fill="none" stroke="#ddd" strokeWidth="1.200" /><path d="M5 1a4 4 0 0 1 4 4H5z" fill="#ddd" /></svg>
      </div>
      <div className="pt-[3px] pl-[2px]">
        <CheckRow label="Disable imprinting" />
        <CheckRow label="Show constraints" />
        <CheckRow label="Show expressions" />
        <CheckRow label="Show errors" checked />
      </div>
      <div className="flex h-[15px] items-center justify-end gap-[2px] pr-[2px] pb-px">
        <button aria-label="Explode" className="flex size-[11px] items-center justify-center rounded-sm border border-[#888]">
          <svg width="9" height="9" viewBox="0 0 9 9" fill="none" stroke="#ddd"><circle cx="4.500" cy="4.500" r="3.500" /><path d="m2 7 4-5M4 3l3 3" /></svg>
        </button>
        <button className="h-[11px] w-[25px] rounded-sm border border-[#888] text-[6px] leading-[9px] font-bold">Final</button>
        <button aria-label="Sketch help" className="ml-[3px]">
          <svg width="7" height="7" viewBox="0 0 20 20"><circle cx="10" cy="10" r="10" fill="#ccc" /><path d="M6.500 8q0-4 3.500-4t3.500 3.500Q13.500 10 10 10.500V13M10 14.500V17" fill="none" stroke="#222" strokeWidth="2.500" /></svg>
        </button>
      </div>
    </section>
  )
}

const SIDE_BUTTONS: { label: string; icon: ReactNode }[] = [
  { label: 'Appearance', icon: <><path d="M1 10.500 4 7h6l1.500 3.500z" fill="#eee" /><path d="M4 6.500 7 2l2.500 1.500V7z" fill="#aaa" /></> },
  { label: 'Configurations', icon: <><path d="M1 1.500h5.500V6H1z" fill="#3f7fd6" /><circle cx="7.500" cy="7.500" r="3.500" fill="#eee" /><circle cx="7.500" cy="7.500" r="1.200" fill="#777" /></> },
  { label: 'Custom table', icon: <><path d="M1.500 2v8M10.500 2v8M3 3.500h6M3 8.500h6M4 2v3M8 2v3" stroke="#aaa" fill="none" /><circle cx="6" cy="6.500" r="2" stroke="#ccc" fill="none" /></> },
  { label: 'Simulation', icon: <><path d="m4 6 3-3 3 3 1.500 3-4 1.500L4 9z" fill="#b5b5b5" /><path d="M1 5.500h3V8H1z" fill="#3f7fd6" /></> },
]

function Canvas() {
  return (
    <main className="relative flex-1 overflow-hidden bg-[#333] text-[7px]">
      <Drawing />
      <ViewCube />
      <button aria-label="View options" className="absolute top-[76px] right-[11px] flex items-center gap-1">
        <svg width="9" height="9" viewBox="0 0 9 9"><path d="m0.500 2 4-1.500 4 1V7l-4 2-4-1.500z" fill="#e8e8e8" /><path d="m4.500 3.500 4-1.500v5l-4 2z" fill="#b0b0b0" /></svg>
        <svg width="4" height="3" viewBox="0 0 4 3"><path d="M0 0h4L2 2.500z" fill="#ddd" /></svg>
      </button>
      <SketchDialog />
      <button aria-label="Show list" className="absolute top-[211px] left-0 flex h-[19px] w-[18px] items-center justify-center border border-l-0 border-[#6a6a6a] bg-[#333]">
        <svg width="10" height="10" viewBox="0 0 10 10" fill="none" stroke="#ddd"><path d="M0 .5h3M1.500 0v9M1.500 3h2M4 .5h6M4.500 3.500h5M4.500 6.500h5M3 9.500h7" /></svg>
      </button>
      <div className="absolute top-[177px] right-0 flex w-[17px] flex-col border border-r-0 border-[#777] text-[#e0e0e0]">
        {SIDE_BUTTONS.map((s) => (
          <button key={s.label} aria-label={s.label} className="flex h-[17px] items-center justify-center border-b border-[#777] bg-[#333]">
            <svg width="12" height="12" viewBox="0 0 12 12">{s.icon}</svg>
          </button>
        ))}
        <button className="h-4 bg-[#333] font-serif text-[9px] leading-none font-bold italic">(x)</button>
      </div>
      <p className="absolute bottom-[2px] left-[6px] flex items-center gap-1 leading-[10px] text-[#c4c4c4]">
        <span className="relative"><Wifi size={9} /><span className="absolute top-0 left-1 h-[9px] w-px bg-[#e05252]" /></span>
        Poor connection...
      </p>
      <div className="absolute right-[6px] bottom-[2px] flex gap-2">
        <button aria-label="Mass properties"><svg width="10" height="9" viewBox="0 0 10 9"><path d="m0 6 3-2V2h6v4l-2 2H0z" fill="#bbb" /><path d="M1 6h6M4 4h4" stroke="#444" strokeWidth="0.700" /></svg></button>
        <button aria-label="Measure"><svg width="10" height="9" viewBox="0 0 10 9"><path d="M0 8V5.500Q2 1.500 5 1.500t5 4V8z" fill="#bbb" /><path d="M2.500 6.500Q5 2.500 7.500 6.500z" fill="none" stroke="#333" /></svg></button>
        <button aria-label="Units"><svg width="9" height="9" viewBox="0 0 9 9" fill="none" stroke="#bbb"><path d="M4.500 1v7M2 1.500h5L8 6q-1 1.500-2.500 0V2M3.500 2v4Q2 7.500 1 6l1-4.500M1 8.500h7" /></svg></button>
      </div>
    </main>
  )
}

function DocumentTabs() {
  return (
    <footer className="flex h-4 shrink-0 items-stretch bg-[#555] text-[7px] font-medium text-[#e0e0e0]">
      <button aria-label="Tab manager" className="flex w-[21px] items-center justify-center bg-[#2f2f2f]">
        <svg width="10" height="9" viewBox="0 0 10 9" fill="none" stroke="#eee" strokeWidth="1.200"><path d="M3 6.500H.6V1h3l1 1h4.800v2" /><circle cx="5.800" cy="5" r="2" /><path d="m7.200 6.500 2 2" /></svg>
      </button>
      <button aria-label="Insert tab" className="flex w-[21px] items-center justify-center bg-[#4a4a4a]"><Plus size={10} strokeWidth={3} /></button>
      <button className="mb-px flex w-[103px] items-center gap-[2px] border-b border-[#64b0e8] bg-[#333] pl-[6px]">
        <svg width="9" height="9" viewBox="0 0 9 9" fill="#eee"><path d="M0 2.500 2.500 1v7L0 8.500zM3 1h2.500v7.500H3zM6.500 2 9 1v6.500L6.500 8.500z" /></svg>
        Part Studio 1
      </button>
      <button className="ml-[2px] flex w-[104px] items-center gap-[2px] bg-[#1c1c1c] pl-[6px]">
        <svg width="9" height="9" viewBox="0 0 9 9"><path d="M0 0h7v7H0z" fill="#eee" /><path d="M2 2h7v6.500H2z" fill="#aaa" stroke="#eee" strokeWidth="0.600" /></svg>
        Assembly 1
      </button>
    </footer>
  )
}

export default function App() {
  return (
    <div className="flex h-screen flex-col overflow-hidden bg-[#333] font-['Roboto',sans-serif]">
      <TopBar />
      <div className="flex min-h-0 flex-1">
        <Dock />
        <div className="flex min-w-0 flex-1 flex-col">
          <BrowserChrome />
          <div className="flex min-h-0 flex-1 bg-white">
            <BrowserSidebar />
            <div className="flex min-w-0 flex-1 flex-col">
              <AppHeader />
              <Toolbar />
              <div className="flex min-h-0 flex-1">
                <LeftStrip />
                <FeaturePanel />
                <Canvas />
              </div>
              <DocumentTabs />
            </div>
          </div>
        </div>
      </div>
    </div>
  )
}
